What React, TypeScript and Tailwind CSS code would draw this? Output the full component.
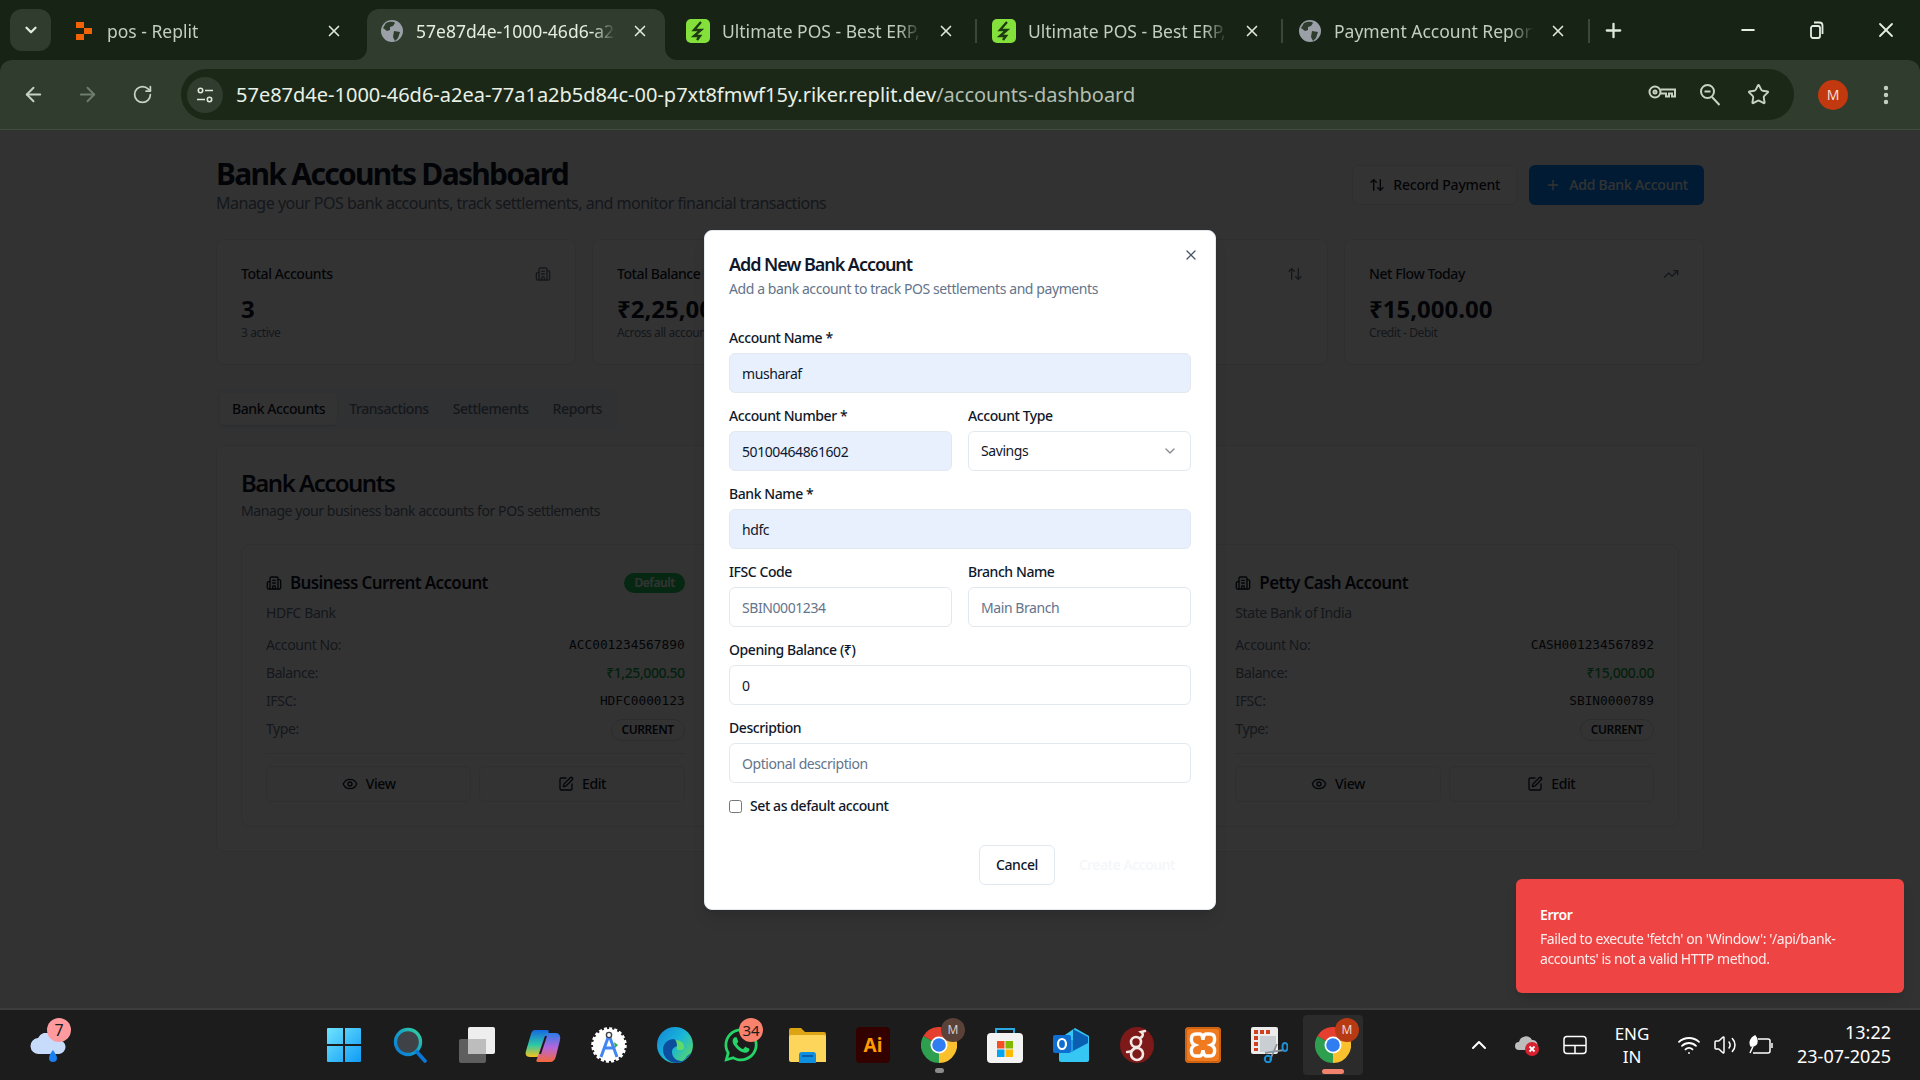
import {
  ArrowLeft,
  ArrowRight,
  ArrowUpDown,
  Building2,
  ChevronDown,
  ChevronUp,
  EllipsisVertical,
  Eye,
  Minus,
  Plus,
  RotateCw,
  SquarePen,
  Star,
  TrendingUp,
  Volume2,
  Wifi,
  X,
} from "lucide-react";
import { FaWhatsapp } from "react-icons/fa";

const tabs = [
  { title: "pos - Replit", icon: "replit", first: true },
  { title: "57e87d4e-1000-46d6-a2ea-77a1a2b5d84c", icon: "globe", active: true },
  { title: "Ultimate POS - Best ERP, Stock", icon: "pos" },
  { title: "Ultimate POS - Best ERP, Stock", icon: "pos", sep: true },
  { title: "Payment Account Report - Ultimate", icon: "globe", sep: true },
];

const stats = [
  { title: "Total Accounts", value: "3", note: "3 active", icon: <Building2 size={16} /> },
  { title: "Total Balance", value: "₹2,25,000.50", note: "Across all accounts", icon: <span className="text-sm">₹</span> },
  { title: "Today's Transactions", value: "12", note: "Credits and debits", icon: <ArrowUpDown size={16} /> },
  { title: "Net Flow Today", value: "₹15,000.00", note: "Credit - Debit", icon: <TrendingUp size={16} /> },
];

const accounts = [
  { name: "Business Current Account", bank: "HDFC Bank", no: "ACC001234567890", balance: "₹1,25,000.50", ifsc: "HDFC0000123", def: true },
  { name: "Savings Account", bank: "ICICI Bank", no: "ACC001234567891", balance: "₹85,000.00", ifsc: "ICIC0000456", def: false },
  { name: "Petty Cash Account", bank: "State Bank of India", no: "CASH001234567892", balance: "₹15,000.00", ifsc: "SBIN0000789", def: false },
];

function Favicon({ kind }: { kind: string }) {
  if (kind === "replit") {
    return (
      <svg width="18" height="20" viewBox="0 0 18 20" className="ml-[2px]">
        <path d="M1 1h8v6H1zM9 7h8v6H9zM1 13h8v6H1z" fill="#f26207" />
      </svg>
    );
  }
  if (kind === "pos") {
    return (
      <svg width="24" height="24" viewBox="0 0 24 24">
        <rect width="24" height="24" rx="5" fill="#84e13c" />
        <path d="M15 3 8 11h7l-7 6h6l-3 4" fill="none" stroke="#1d3a12" strokeWidth="2.4" />
      </svg>
    );
  }
  return (
    <svg width="22" height="22" viewBox="0 0 22 22">
      <circle cx="11" cy="11" r="11" fill="#9aa0a6" />
      <path d="M5 3c3-1 7-2 9 0l-2 3-3 1v3l-3 1-4-3zM13 11l6 1-2 6-3 3-2-4z" fill="#2e3c2d" />
    </svg>
  );
}

function BrowserTab({ title, icon, active, sep, first }: { title: string; icon: string; active?: boolean; sep?: boolean; first?: boolean }) {
  return (
    <div className={active ? "relative w-[306px] h-[51px] pr-[8px]" : "relative w-[306px] h-[51px]"}>
      {sep && <div className="absolute left-[-4px] top-[10px] w-[2px] h-[24px] bg-[#3a473a]" />}
      <div className={`relative flex items-center h-full pb-[7px] rounded-t-xl ${first ? "pl-[10px]" : "pl-[13px]"} ${active ? "bg-[#2f3c2e]" : ""}`}>
        {active && (
          <>
            <svg width="12" height="12" className="absolute left-[-12px] bottom-0">
              <path d="M12 0v12H0A12 12 0 0 0 12 0z" fill="#2f3c2e" />
            </svg>
            <svg width="12" height="12" className="absolute right-[-12px] bottom-0">
              <path d="M0 0v12h12A12 12 0 0 1 0 0z" fill="#2f3c2e" />
            </svg>
          </>
        )}
        <div className="w-[24px] flex justify-center shrink-0">
          <Favicon kind={icon} />
        </div>
        <span
          className={`ml-[12px] overflow-hidden whitespace-nowrap text-[17.5px] leading-[24px] [mask-image:linear-gradient(to_right,black_88%,transparent)] ${
            first ? "w-[203px]" : "w-[200px]"
          } ${active ? "text-[#e6ede2]" : "text-[#c3cec0]"}`}
        >
          {title}
        </span>
        <X size={18} strokeWidth={2.2} className="ml-[15px] text-[#dfe7db] shrink-0" />
      </div>
    </div>
  );
}

function ChromeIcon({ size = 36 }: { size?: number }) {
  return (
    <svg width={size} height={size} viewBox="0 0 36 36">
      <path d="M18 18 2.4 9A18 18 0 0 1 33.6 9z" fill="#e5402f" />
      <path d="M18 18 33.6 9A18 18 0 0 1 18 36z" fill="#fbc02d" />
      <path d="M18 18 18 36A18 18 0 0 1 2.4 9z" fill="#2e9e4f" />
      <circle cx="18" cy="18" r="8.5" fill="#fff" />
      <circle cx="18" cy="18" r="6.8" fill="#2f7df0" />
    </svg>
  );
}

function WindowsIcon() {
  return (
    <svg width="36" height="36" viewBox="0 0 36 36" className="mr-[3px]">
      <defs>
        <linearGradient id="win" x1="0" y1="0" x2="1" y2="1">
          <stop offset="0" stopColor="#6fe3ff" />
          <stop offset="1" stopColor="#0f9cf5" />
        </linearGradient>
      </defs>
      <path d="M1 2a1 1 0 0 1 1-1h15v16H1zM19 1h15a1 1 0 0 1 1 1v15H19zM1 19h16v16H2a1 1 0 0 1-1-1zM19 19h16v15a1 1 0 0 1-1 1H19z" fill="url(#win)" />
    </svg>
  );
}

function SearchIcon() {
  return (
    <svg width="36" height="36" viewBox="0 0 36 36" className="mr-[2px]">
      <defs>
        <linearGradient id="sr" x1="1" y1="0" x2="0" y2="1">
          <stop offset="0" stopColor="#35d399" />
          <stop offset="0.5" stopColor="#14a0c8" />
          <stop offset="1" stopColor="#0a78d7" />
        </linearGradient>
      </defs>
      <circle cx="16" cy="15" r="12.500" fill="#3f4347" stroke="url(#sr)" strokeWidth="3.400" />
      <path d="M25 25 33 34" stroke="#0a78d7" strokeWidth="3.600" strokeLinecap="round" />
    </svg>
  );
}

function TaskViewIcon() {
  return (
    <svg width="36" height="36" viewBox="0 0 36 36">
      <rect x="9" y="0" width="27" height="27" rx="2" fill="#eeeeee" />
      <rect x="0" y="12" width="27" height="24" rx="2" fill="#5e5e5e" />
      <rect x="9" y="12" width="18" height="15" fill="#bdbdbd" />
    </svg>
  );
}

function CopilotIcon() {
  return (
    <svg width="36" height="36" viewBox="0 0 36 36">
      <defs>
        <linearGradient id="cpa" x1="0" y1="0" x2="0" y2="1">
          <stop offset="0" stopColor="#1668e3" />
          <stop offset="0.55" stopColor="#2cc8a5" />
          <stop offset="1" stopColor="#f6c21c" />
        </linearGradient>
        <linearGradient id="cpb" x1="0" y1="0" x2="0" y2="1">
          <stop offset="0" stopColor="#2a7de8" />
          <stop offset="0.5" stopColor="#b566dc" />
          <stop offset="1" stopColor="#f5683a" />
        </linearGradient>
      </defs>
      <path d="M10 3h12c2 0 2 2 1 4l-7 20c-1 2-2 3-5 3H5c-4 0-5-3-4-6L6 7c1-3 2-4 4-4z" fill="url(#cpa)" />
      <path d="M24 6h7c3 0 5 3 4 7l-4 16c-1 4-3 6-6 6H13c-2 0-2-2-1-3l8-25c1-1 2-1 4-1z" fill="url(#cpb)" />
      <path d="M21 9 15 27" stroke="#191919" strokeWidth="2" />
    </svg>
  );
}

function ArtifactIcon() {
  return (
    <svg width="36" height="36" viewBox="0 0 36 36">
      <circle cx="18" cy="18" r="16" fill="#fff" stroke="#fff" strokeWidth="3.500" strokeDasharray="3 2" />
      <path d="M18 8 10 30M18 8l8 22M12 21h12" fill="none" stroke="#4285f4" strokeWidth="3" />
      <circle cx="18" cy="8" r="2.600" fill="#fff" stroke="#3c4043" strokeWidth="1.400" />
      <path d="M23 15l4 3-3 3z" fill="#34a853" />
    </svg>
  );
}

function EdgeIcon() {
  return (
    <svg width="36" height="36" viewBox="0 0 36 36">
      <defs>
        <linearGradient id="edg" x1="0" y1="0" x2="1" y2="0.8">
          <stop offset="0" stopColor="#1583d8" />
          <stop offset="0.55" stopColor="#19b6d8" />
          <stop offset="1" stopColor="#58d766" />
        </linearGradient>
      </defs>
      <circle cx="18" cy="18" r="18" fill="url(#edg)" />
      <path d="M18 13c6 0 9 3 9 7 0 2-1 3-3 3h-4c0-5-2-10-2-10z" fill="#5edb6c" />
      <path d="M17 12c-7 0-11 5-11 11 0 7 6 13 14 13 3 0 6-1 8-2-6 1-13-2-13-9 0-4 3-5 5-6 0-3-1-6-3-7z" fill="#0b4f9e" />
      <path d="M34 26c-3 6-9 10-15 10 5-1 9-3 11-7z" fill="#0f6cc0" />
    </svg>
  );
}

function FolderIcon() {
  return (
    <svg width="37" height="36" viewBox="0 0 37 36">
      <path d="M0 3a2 2 0 0 1 2-2h10l4 4h19a2 2 0 0 1 2 2v6H0z" fill="#dca413" />
      <path d="M0 10a2 2 0 0 1 2-2h33a2 2 0 0 1 2 2v25H2a2 2 0 0 1-2-2z" fill="#fdd55b" />
      <path d="M10 36v-8a3 3 0 0 1 3-3h11a3 3 0 0 1 3 3v8z" fill="#0f8fe0" />
      <rect x="13" y="28" width="11" height="2" fill="#0a5ea8" />
    </svg>
  );
}

function StoreIcon() {
  return (
    <svg width="36" height="36" viewBox="0 0 36 36">
      <path d="M9 6V2h18v4" fill="none" stroke="#2aa9e0" strokeWidth="2" />
      <rect y="6" width="36" height="30" rx="4" fill="#f3f3f3" />
      <path d="M10 14h7.500v7.500H10z" fill="#f25022" />
      <path d="M18.500 14H26v7.500h-7.500z" fill="#7fba00" />
      <path d="M10 22.500h7.500V30H10z" fill="#00a4ef" />
      <path d="M18.500 22.500H26V30h-7.500z" fill="#ffb900" />
    </svg>
  );
}

function OutlookIcon() {
  return (
    <svg width="36" height="36" viewBox="0 0 36 36">
      <path d="M6 12 22 1l14 8v24a2 2 0 0 1-2 2H8a2 2 0 0 1-2-2z" fill="#35c6f4" />
      <path d="M20 2 35 10v6l-15 8z" fill="#0a5fb3" />
      <path d="M6 13h14v12H6z" fill="#1b9de2" />
      <rect x="0" y="8" width="18" height="18" rx="2" fill="#0f6fd0" />
      <ellipse cx="9" cy="17" rx="4" ry="5" fill="none" stroke="#fff" strokeWidth="2.200" />
    </svg>
  );
}

function DragonIcon() {
  return (
    <svg width="36" height="36" viewBox="0 0 36 36">
      <ellipse cx="18" cy="18" rx="17" ry="18" fill="#7d1a19" />
      <circle cx="17" cy="15" r="5" fill="none" stroke="#f2e9e6" strokeWidth="2.600" />
      <circle cx="18" cy="27" r="6" fill="none" stroke="#f2e9e6" strokeWidth="2.600" />
      <path d="M21 11c3-1 4-4 1-6l4-1M8 25c3 0 5-1 7-3" fill="none" stroke="#f2e9e6" strokeWidth="2.400" strokeLinecap="round" />
    </svg>
  );
}

function XamppIcon() {
  return (
    <svg width="36" height="36" viewBox="0 0 36 36">
      <rect width="36" height="36" rx="4" fill="#ef7a1f" />
      <rect x="1" y="1" width="34" height="34" rx="4" fill="none" stroke="#c45b0d" strokeWidth="1.500" />
      <path d="M15 7h-4c-6 0-6 9-1 11-5 2-5 11 1 11h4c2 0 3-5 3-6 0 1 1 6 3 6h4c6 0 6-9 1-11 5-2 5-11-1-11h-4c-2 0-3 4-3 6 0-2-1-6-3-6z" fill="none" stroke="#fff" strokeWidth="3.400" />
    </svg>
  );
}

function SnipIcon() {
  return (
    <svg width="37" height="36" viewBox="0 0 37 36">
      <rect width="27" height="27" rx="2" fill="#ececec" />
      <path d="M3 3h4v4H3zM9 3h4v4H9zM15 3h4v4h-4zM3 9h4v4H3zM3 15h4v4H3zM3 21h4v3H3z" fill="#d1401f" />
      <rect x="9" y="9" width="16" height="16" fill="#c9ced3" />
      <path d="M14 26 33 23M19 33l7-16" stroke="#8a949c" strokeWidth="1.800" />
      <ellipse cx="34" cy="20" rx="2.500" ry="4" fill="none" stroke="#1e90d8" strokeWidth="2" />
      <circle cx="17" cy="32" r="3.200" fill="none" stroke="#1e90d8" strokeWidth="2" />
    </svg>
  );
}

function Badge({ text, color, cls = "" }: { text: string; color: string; cls?: string }) {
  return (
    <span className={`absolute flex items-center justify-center w-[24px] h-[24px] rounded-full ${color} ${cls}`}>
      {text}
    </span>
  );
}

const dockIcons = [
  <WindowsIcon />,
  <SearchIcon />,
  <TaskViewIcon />,
  <CopilotIcon />,
  <ArtifactIcon />,
  <EdgeIcon />,
  <div className="relative">
    <FaWhatsapp size={38} className="text-[#25d366]" />
    <Badge text="34" color="bg-[#f8826b] text-[#1c1c1c]" cls="left-[17px] top-[-8px] text-[15px]" />
  </div>,
  <FolderIcon />,
  <div className="w-[34px] h-[36px] rounded-[4px] bg-[#330000] flex items-center justify-center text-[#ff9a00] text-[19px] font-bold">
    Ai
  </div>,
  <div className="relative">
    <ChromeIcon />
    <Badge text="M" color="bg-[#5a4238] text-[#d8ccc6]" cls="left-[20px] top-[-9px] text-[12px]" />
    <div className="absolute left-[14px] top-[41px] w-[9px] h-[5px] rounded-full bg-[#8a8a8a]" />
  </div>,
  <StoreIcon />,
  <OutlookIcon />,
  <DragonIcon />,
  <XamppIcon />,
  <SnipIcon />,
];

function Field({ label, value, placeholder, filled }: { label: string; value?: string; placeholder?: string; filled?: boolean }) {
  return (
    <div className="flex flex-col gap-2">
      <label className="text-sm leading-none font-medium text-[#0f172a]">{label}</label>
      <input
        readOnly
        value={value ?? ""}
        placeholder={placeholder}
        className={`h-10 w-full rounded-md border border-[#e2e8f0] px-3 text-sm text-[#0f172a] tracking-[-0.42px] placeholder:text-[#64748b] outline-none ${
          filled ? "bg-[#e8f0fe]" : "bg-white"
        }`}
      />
    </div>
  );
}

function AccountCard({ account }: { account: (typeof accounts)[number] }) {
  return (
    <div className="rounded-lg border border-[#e2e8f0] bg-white p-6">
      <div className="flex items-center justify-between h-7">
        <div className="flex items-center gap-2 text-[#0f172a]">
          <Building2 size={16} />
          <span className="text-[17px] font-semibold tracking-[-0.63px]">{account.name}</span>
        </div>
        {account.def && (
          <span className="rounded-full bg-[#22c55e] px-2.5 py-0.5 text-xs font-semibold text-white">Default</span>
        )}
      </div>
      <p className="mt-1.5 text-sm text-[#64748b]">{account.bank}</p>
      <div className="mt-3 flex flex-col gap-2 text-sm">
        <div className="flex justify-between">
          <span className="text-[#64748b]">Account No:</span>
          <span className="font-['DejaVu_Sans_Mono',monospace] text-[12.8px] leading-5 tracking-normal text-[#0f172a]">{account.no}</span>
        </div>
        <div className="flex justify-between">
          <span className="text-[#64748b]">Balance:</span>
          <span className="font-medium text-[#16a34a]">{account.balance}</span>
        </div>
        <div className="flex justify-between">
          <span className="text-[#64748b]">IFSC:</span>
          <span className="font-['DejaVu_Sans_Mono',monospace] text-[12.8px] leading-5 tracking-normal text-[#0f172a]">{account.ifsc}</span>
        </div>
        <div className="flex justify-between">
          <span className="text-[#64748b]">Type:</span>
          <span className="rounded-full border border-[#d5dbe3] px-2.5 py-0.5 text-xs font-semibold text-[#0f172a]">CURRENT</span>
        </div>
      </div>
      <div className="mt-3 flex gap-2 border-t border-[#e2e8f0] pt-3">
        <button className="flex h-9 flex-1 items-center justify-center gap-2 rounded-md border border-[#e2e8f0] text-sm font-medium text-[#0f172a]">
          <Eye size={16} />
          View
        </button>
        <button className="flex h-9 flex-1 items-center justify-center gap-2 rounded-md border border-[#e2e8f0] text-sm font-medium text-[#0f172a]">
          <SquarePen size={16} />
          Edit
        </button>
      </div>
    </div>
  );
}

export default function App() {
  return (
    <div className="w-[1920px] h-[1080px] overflow-hidden flex flex-col font-['Noto_Sans',sans-serif]">
      {/* browser frame */}
      <div className="h-[130px] shrink-0 bg-[#172315]">
        <div className="flex h-[60px] items-end pl-[10px]">
          <div className="mb-[9px] flex h-[42px] w-[41px] items-center justify-center rounded-xl bg-[#2f3c2e]">
            <ChevronDown size={18} strokeWidth={3} className="text-[#e3ebdf]" />
          </div>
          <div className="ml-[10px] flex">
            {tabs.map((t, i) => (
              <BrowserTab key={i} title={t.title} icon={t.icon} active={t.active} sep={t.sep} first={t.first} />
            ))}
          </div>
          <div className="mb-[17px] ml-[-3px] h-[24px] w-[2px] bg-[#3a473a]" />
          <div className="mb-[18px] ml-[12px]">
            <Plus size={23} strokeWidth={2.4} className="text-[#dfe7db]" />
          </div>
          <div className="ml-auto flex h-full text-[#e6ede2]">
            <div className="flex w-[69px] items-center justify-center"><Minus size={20} strokeWidth={2.4} /></div>
            <div className="flex w-[69px] items-center justify-center">
              <svg width="16" height="18" viewBox="0 0 16 18" fill="none" stroke="currentColor" strokeWidth="1.800">
                <rect x="2" y="5" width="9" height="12" rx="2" />
                <path d="M5 1.500h5.500a3 3 0 0 1 3 3V13" />
              </svg>
            </div>
            <div className="flex w-[69px] items-center justify-center"><X size={24} strokeWidth={1.8} /></div>
          </div>
        </div>
        <div className="flex h-[70px] items-center rounded-t-xl border-b border-[#404d3f] bg-[#2f3c2e] pl-[6px]">
          <div className="flex w-[54.5px] justify-center"><ArrowLeft size={23} className="text-[#c7d2c5]" /></div>
          <div className="flex w-[54.5px] justify-center"><ArrowRight size={23} className="text-[#6f7d6e]" /></div>
          <div className="flex w-[54.5px] justify-center"><RotateCw size={21} className="text-[#c7d2c5]" /></div>
          <div className="ml-[11.5px] flex h-[51px] w-[1613px] items-center rounded-full bg-[#1b2818] pl-[6px] pr-[12px]">
            <div className="flex h-9 w-9 items-center justify-center rounded-full bg-[#2f3c2e]">
              <svg width="18" height="18" viewBox="0 0 18 18" fill="none" stroke="#dfe7db" strokeWidth="1.600">
                <circle cx="4.500" cy="4.500" r="2.200" />
                <circle cx="13.500" cy="13.500" r="2.200" />
                <path d="M9 4.500h8M1 13.500h8" />
              </svg>
            </div>
            <span className="ml-[13px] whitespace-nowrap text-[20px] text-[#e9f0e5]">
              57e87d4e-1000-46d6-a2ea-77a1a2b5d84c-00-p7xt8fmwf15y.riker.replit.dev<span className="text-[#b3beb0]">/accounts-dashboard</span>
            </span>
            <div className="ml-auto flex text-[#c7d2c5]">
              <div className="flex w-12 justify-center">
                <svg width="28" height="18" viewBox="0 0 28 18" fill="none" stroke="currentColor" strokeWidth="2">
                  <circle cx="7" cy="9" r="5.500" />
                  <circle cx="7" cy="9" r="1.500" />
                  <path d="M12.500 6.500H27v7h-3v-3h-3v3h-3v-3h-5" />
                </svg>
              </div>
              <div className="flex w-12 justify-center">
                <svg width="24" height="24" viewBox="0 0 24 24" fill="none" stroke="currentColor" strokeWidth="2">
                  <circle cx="9.500" cy="8.500" r="6.500" />
                  <path d="M6.500 8.500h6M14 14l7.500 8" />
                </svg>
              </div>
              <div className="flex w-12 justify-center"><Star size={23} /></div>
            </div>
          </div>
          <div className="ml-[24px] flex h-[30px] w-[30px] items-center justify-center rounded-full bg-[#c2380f] text-[14px] text-[#f5ded6]">M</div>
          <div className="ml-[26px] text-[#c7d2c5]"><EllipsisVertical size={24} strokeWidth={2.4} /></div>
        </div>
      </div>

      {/* app page under the modal overlay */}
      <div className="relative h-[878px] shrink-0 overflow-hidden bg-[#fafafa] tracking-[-0.42px]">
        <div className="mx-auto w-[1488px] pt-[25px]">
          <div className="flex items-center justify-between">
            <div>
              <h1 className="text-3xl leading-[38px] font-bold tracking-[-1.7px] text-[#0f172a]">Bank Accounts Dashboard</h1>
              <p className="-mt-0.5 text-base tracking-[-0.5px] text-[#64748b]">
                Manage your POS bank accounts, track settlements, and monitor financial transactions
              </p>
            </div>
            <div className="flex gap-3 tracking-[-0.2px]">
              <button className="flex h-10 items-center gap-2 rounded-md border border-[#e2e8f0] bg-white px-4 text-sm font-medium text-[#0f172a]">
                <ArrowUpDown size={16} />
                Record Payment
              </button>
              <button className="flex h-10 items-center gap-2 rounded-md bg-[#0088ff] px-4 text-sm font-medium text-white">
                <Plus size={16} />
                Add Bank Account
              </button>
            </div>
          </div>

          <div className="mt-6 grid grid-cols-4 gap-4">
            {stats.map((s) => (
              <div key={s.title} className="rounded-lg border border-[#e2e8f0] bg-white p-6">
                <div className="flex items-center justify-between pb-2 text-sm font-medium text-[#0f172a]">
                  {s.title}
                  <span className="text-[#64748b]">{s.icon}</span>
                </div>
                <div className="mt-px text-2xl font-bold tracking-normal text-[#0f172a]">{s.value}</div>
                <p className="-mb-px text-xs text-[#64748b]">{s.note}</p>
              </div>
            ))}
          </div>

          <div className="mt-6 inline-flex h-10 items-center rounded-md bg-[#f1f5f9] p-1 text-sm font-medium text-[#64748b]">
            <div className="rounded-sm bg-white px-3 py-1.5 text-[#0f172a] shadow-sm">Bank Accounts</div>
            <div className="px-3 py-1.5">Transactions</div>
            <div className="px-3 py-1.5">Settlements</div>
            <div className="px-3 py-1.5">Reports</div>
          </div>

          <div className="mt-4 rounded-lg border border-[#e2e8f0] bg-white p-6">
            <h2 className="pt-px text-2xl leading-none font-semibold tracking-[-1.5px] text-[#0f172a]">Bank Accounts</h2>
            <p className="mt-1.5 text-sm text-[#64748b]">Manage your business bank accounts for POS settlements</p>
            <div className="mt-[23px] grid grid-cols-3 gap-4">
              {accounts.map((a) => (
                <AccountCard key={a.name} account={a} />
              ))}
            </div>
          </div>
        </div>

        <div className="absolute inset-0 bg-black/80" />

        {/* modal */}
        <div className="absolute left-[704px] top-[100px] w-[512px] rounded-lg border border-[#e2e8f0] bg-white p-6 shadow-lg">
          <X size={16} className="absolute right-4 top-4 text-[#475569]" />
          <h3 className="text-lg leading-none font-semibold tracking-[-1.05px] text-[#0f172a]">Add New Bank Account</h3>
          <p className="mt-1.5 text-sm text-[#64748b]">Add a bank account to track POS settlements and payments</p>
          <div className="mt-8 flex flex-col gap-4">
            <Field label="Account Name *" value="musharaf" filled />
            <div className="grid grid-cols-2 gap-4">
              <Field label="Account Number *" value="50100464861602" filled />
              <div className="flex flex-col gap-2">
                <label className="text-sm leading-none font-medium text-[#0f172a]">Account Type</label>
                <div className="flex h-10 items-center justify-between rounded-md border border-[#e2e8f0] px-3 text-sm text-[#0f172a]">
                  Savings
                  <ChevronDown size={16} className="opacity-50" />
                </div>
              </div>
            </div>
            <Field label="Bank Name *" value="hdfc" filled />
            <div className="grid grid-cols-2 gap-4">
              <Field label="IFSC Code" placeholder="SBIN0001234" />
              <Field label="Branch Name" placeholder="Main Branch" />
            </div>
            <Field label="Opening Balance (₹)" value="0" />
            <Field label="Description" placeholder="Optional description" />
            <label className="flex items-center gap-2 text-sm leading-none font-medium text-[#0f172a]">
              <input type="checkbox" className="h-[13px] w-[13px]" />
              Set as default account
            </label>
          </div>
          <div className="mt-8 flex justify-end gap-2">
            <button className="h-10 rounded-md border border-[#e2e8f0] bg-white px-4 text-sm font-medium text-[#0f172a]">Cancel</button>
            <button className="h-10 rounded-md bg-white px-4 text-sm font-medium text-[#f4f6f9]">Create Account</button>
          </div>
        </div>

        {/* toast */}
        <div className="absolute bottom-[15px] right-[16px] w-[388px] rounded-md bg-[#ef4444] pb-6 pl-6 pr-8 pt-[26px] text-white shadow-lg">
          <div className="text-sm font-semibold">Error</div>
          <div className="mt-1 text-sm opacity-90">Failed to execute 'fetch' on 'Window': '/api/bank-accounts' is not a valid HTTP method.</div>
        </div>
      </div>

      {/* windows taskbar */}
      <div className="flex h-[72px] shrink-0 items-center border-t-2 border-[#3c3c3c] bg-[#1c1c1c] text-white">
        <div className="relative ml-[30px] w-[40px]">
          <svg width="37" height="30" viewBox="0 0 37 30" className="mt-[6px]">
            <path d="M9 21a8 8 0 0 1-1-16 11 11 0 0 1 20 2 7 7 0 0 1 1 14z" fill="#c7dbfb" />
            <path d="M23 17c2 3 4 6 4 8a4 4 0 0 1-8 0c0-3 2-5 4-8z" fill="#1a7ff0" />
          </svg>
          <Badge text="7" color="bg-[#ff9a9e] text-[#1c1c1c]" cls="left-[17px] top-[-9px] text-[16px]" />
        </div>
        <div className="ml-[242px] flex items-center">
          {dockIcons.map((icon, i) => (
            <div key={i} className="flex w-[66px] justify-center">{icon}</div>
          ))}
          <div className="ml-[-2px] flex w-[66px] justify-center">
            <div className="relative flex h-[60px] w-[60px] items-center justify-center rounded-[4px] bg-[#2b2b2b]">
              <ChromeIcon />
              <Badge text="M" color="bg-[#b83a12] text-[#f0d6cc]" cls="left-[32px] top-[3px] text-[12px]" />
              <div className="absolute bottom-[1px] left-[19px] h-[5px] w-[22px] rounded-full bg-[#f0826e]" />
            </div>
          </div>
        </div>
        <div className="ml-auto flex items-center pr-[29px]">
          <div className="flex w-12 justify-center"><ChevronUp size={24} /></div>
          <div className="flex w-12 justify-center">
            <svg width="26" height="24" viewBox="0 0 26 24">
              <path d="M5 17a4 4 0 0 1 0-8 7 7 0 0 1 13-2 5 5 0 0 1 1 10z" fill="#bdbdbd" />
              <circle cx="18" cy="16" r="7" fill="#d9202f" />
              <path d="M15.500 13.500l5 5M20.500 13.500l-5 5" stroke="#fff" strokeWidth="1.800" />
            </svg>
          </div>
          <div className="flex w-[47px] justify-center">
            <svg width="24" height="20" viewBox="0 0 24 20" fill="none" stroke="#fff" strokeWidth="1.500">
              <rect x="1" y="1.500" width="22" height="17" rx="3" />
              <path d="M1 10.500h22M12 10.500v8" />
            </svg>
          </div>
          <div className="flex w-[68px] flex-col items-center text-[17px] leading-[23px]">
            <span>ENG</span>
            <span>IN</span>
          </div>
          <div className="ml-[5px] flex w-9 justify-center"><Wifi size={24} strokeWidth={1.800} /></div>
          <div className="flex w-9 justify-center"><Volume2 size={24} strokeWidth={1.500} /></div>
          <div className="flex w-9 justify-center">
            <svg width="25" height="22" viewBox="0 0 25 22" fill="none" stroke="#fff" strokeWidth="1.500">
              <path d="M9 5h10a2 2 0 0 1 2 2v10a2 2 0 0 1-2 2H4" />
              <path d="M23 9v5" />
              <path d="M6 2C2 4 0 8 2 12c3 0 6-1 6-5 0-2-1-4-2-5zM1 19l5-11" fill="#fff" />
            </svg>
          </div>
          <div className="mb-[3px] flex w-[112px] flex-col items-end text-[18px] leading-[24px]">
            <span>13:22</span>
            <span>23-07-2025</span>
          </div>
        </div>
      </div>
    </div>
  );
}
